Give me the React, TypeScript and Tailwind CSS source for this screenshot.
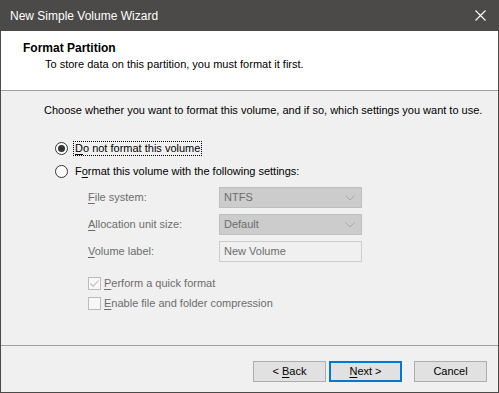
import React from "react";

const font = { fontFamily: '"Liberation Sans", Arial, sans-serif' };

function U({ children }: { children: React.ReactNode }) {
  return <span className="underline underline-offset-2">{children}</span>;
}

function Radio({ checked }: { checked?: boolean }) {
  return (
    <span className="flex h-[13px] w-[13px] shrink-0 items-center justify-center rounded-full border border-[#333333] bg-white">
      {checked && <span className="h-[7px] w-[7px] rounded-full bg-[#333333]" />}
    </span>
  );
}

function Checkbox({ checked }: { checked?: boolean }) {
  return (
    <span className="flex h-[13px] w-[13px] shrink-0 items-center justify-center border border-[#bcbcbc] bg-[#f7f7f7]">
      {checked && (
        <svg width="11" height="11" viewBox="0 0 11 11" fill="none">
          <path d="M1.5 5.5 L4.2 8.2 L9.5 2.5" stroke="#bcbcbc" strokeWidth="1.1" />
        </svg>
      )}
    </span>
  );
}

function Combo({ value }: { value: string }) {
  return (
    <div className="flex h-[21px] w-[143px] items-center justify-between border border-[#bfbfbf] bg-[#cccccc] pl-[4px] pr-[6px] text-[#6d6d6d]">
      <span>{value}</span>
      <svg width="10" height="6" viewBox="0 0 10 6" fill="none">
        <path d="M0.5 0.5 L5 5 L9.5 0.5" stroke="#a8a8a8" strokeWidth="1" />
      </svg>
    </div>
  );
}

function Field({ label, children }: { label: React.ReactNode; children: React.ReactNode }) {
  return (
    <div className="flex items-center">
      <span className="w-[131px] text-[#6d6d6d]">{label}</span>
      {children}
    </div>
  );
}

function Button({ children, primary }: { children: React.ReactNode; primary?: boolean }) {
  return (
    <button
      className={
        primary
          ? "flex h-[21px] w-[73px] items-center justify-center border-2 border-[#0078d7] bg-[#e1e1e1] text-black"
          : "flex h-[21px] w-[73px] items-center justify-center border border-[#adadad] bg-[#e1e1e1] text-black"
      }
    >
      <span className="whitespace-pre">{children}</span>
    </button>
  );
}

export default function App() {
  return (
    <div className="flex h-[393px] w-[499px] flex-col bg-[#4b4a48] text-[11px] text-black" style={font}>
      {/* Title bar */}
      <div className="flex h-[31px] shrink-0 items-center justify-between pl-[10px] pr-[13px] text-[12px] text-white">
        <span>New Simple Volume Wizard</span>
        <svg width="11" height="11" viewBox="0 0 11 11" fill="none">
          <path d="M0.5 0.5 L10.5 10.5 M10.5 0.5 L0.5 10.5" stroke="white" strokeWidth="1.1" />
        </svg>
      </div>

      <div className="mx-[1px] mb-[1px] flex flex-1 flex-col bg-[#f0f0f0]">
        {/* Header */}
        <div className="h-[60px] shrink-0 border-b border-[#a0a0a0] bg-white pl-[22px] pt-[10px]">
          <div className="text-[12px] font-bold leading-[14px]">Format Partition</div>
          <div className="mt-[3px] pl-[22px] leading-[13px]">
            To store data on this partition, you must format it first.
          </div>
        </div>

        {/* Body */}
        <div className="flex-1 pl-[43px] pt-[13px]">
          <div className="leading-[13px]">
            Choose whether you want to format this volume, and if so, which settings you want to use.
          </div>

          <div className="mt-[25px] flex items-center gap-[6px] pl-[11px]">
            <Radio checked />
            <span className="px-[1px] leading-[13px] outline outline-1 outline-dotted outline-black">
              <U>D</U>o not format this volume
            </span>
          </div>

          <div className="mt-[10px] flex items-center gap-[6px] pl-[11px]">
            <Radio />
            <span className="px-[1px] leading-[13px]">
              F<U>o</U>rmat this volume with the following settings:
            </span>
          </div>

          <div className="mt-[9px] flex flex-col gap-[6px] pl-[44px]">
            <Field label={<><U>F</U>ile system:</>}>
              <Combo value="NTFS" />
            </Field>
            <Field label={<><U>A</U>llocation unit size:</>}>
              <Combo value="Default" />
            </Field>
            <Field label={<><U>V</U>olume label:</>}>
              <div className="flex h-[21px] w-[143px] items-center border border-[#cccccc] bg-[#f0f0f0] pl-[4px] text-[#6d6d6d]">
                New Volume
              </div>
            </Field>
          </div>

          <div className="mt-[15px] flex flex-col gap-[7px] pl-[44px] text-[#6d6d6d]">
            <div className="flex h-[13px] items-center gap-[3px]">
              <Checkbox checked />
              <span>
                <U>P</U>erform a quick format
              </span>
            </div>
            <div className="flex h-[13px] items-center gap-[3px]">
              <Checkbox />
              <span>
                <U>E</U>nable file and folder compression
              </span>
            </div>
          </div>
        </div>

        {/* Footer */}
        <div className="flex h-[47px] shrink-0 items-start border-t border-[#a0a0a0] pr-[11px] pt-[15px]">
          <div className="flex flex-1 justify-end gap-[3px]">
            <Button>
              {"< "}
              <U>B</U>ack
            </Button>
            <Button primary>
              <U>N</U>
              {"ext >"}
            </Button>
          </div>
          <div className="ml-[12px]">
            <Button>Cancel</Button>
          </div>
        </div>
      </div>
    </div>
  );
}
